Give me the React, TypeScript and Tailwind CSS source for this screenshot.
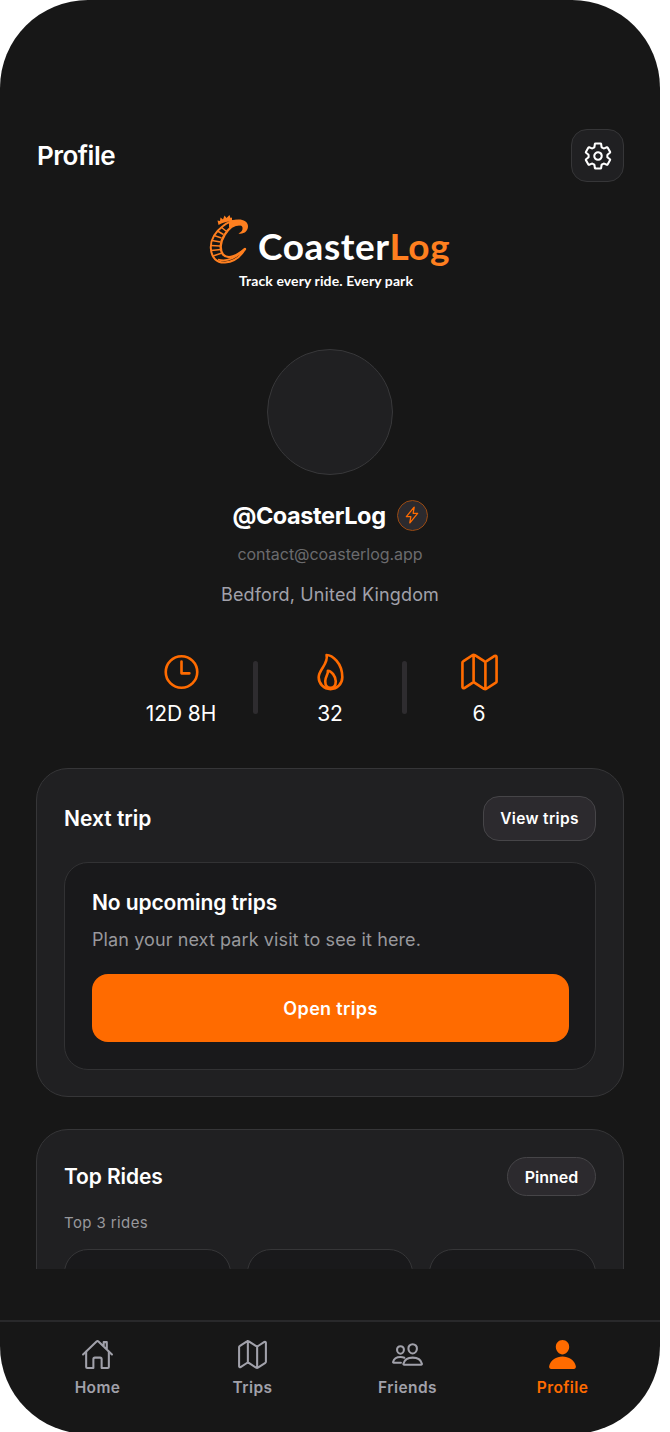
import React from "react";
import {
  IoFlameOutline,
  IoFlashOutline,
  IoHomeOutline,
  IoMapOutline,
  IoPeopleOutline,
  IoPerson,
  IoSettingsOutline,
  IoTimeOutline,
} from "react-icons/io5";
import type { IconType } from "react-icons";

interface IStatProps {
  icon: IconType;
  value: string;
}

const Stat: React.FC<IStatProps> = ({ icon: Icon, value }) => (
  <div className="flex w-36 flex-col items-center">
    <Icon className="size-[43px] text-[#ff6b00]" />
    <span className="mt-2 text-[21px] leading-[26px] tracking-[-0.1px]">{value}</span>
  </div>
);

const Divider = () => <div className="mt-[10px] h-[53px] w-[5px] rounded-full bg-[#2e2c2f]" />;

interface ITabProps {
  icon: IconType;
  label: string;
  active?: boolean;
}

const Tab: React.FC<ITabProps> = ({ icon: Icon, label, active }) => (
  <div
    className={`flex flex-1 flex-col items-center ${
      active ? "text-[#ff6b00]" : "text-[#a1a1aa]"
    }`}
  >
    <Icon className="size-[33px]" />
    <span className="mt-[7px] text-[15.5px] font-semibold leading-5 tracking-[0.4px]">
      {label}
    </span>
  </div>
);

const LogoMark = () => (
  <svg viewBox="0 0 40 52" className="h-[52px] w-10 shrink-0" fill="none" stroke="#ff7f1f">
    {/* rails */}
    <path
      d="M30 8C25 7 19 9 14 13C6 19 1.500 27 1.800 35C2.200 45 8 50 16 49.500C25 49 32 43 36 36"
      strokeWidth="2"
      strokeLinecap="round"
    />
    <path
      d="M31 11C25 11 19 16 15.500 22C11 29 10.500 37 14 41.500C19 47 28 43 36 36"
      strokeWidth="2.400"
      strokeLinecap="round"
    />
    {/* hook */}
    <path
      d="M20 9C29 4.500 38.500 6.500 39 13C39.200 18 35 21.500 29.500 20.500C32.500 19 34 17 33.500 14.500C33 11.500 27 11.500 20 15Z"
      fill="#ff7f1f"
      stroke="none"
    />
    {/* sleepers */}
    <path
      d="M12 14l5 4M8.500 18l6 3.500M5 22.500l7.500 2.500M3 27.500l8.500 1.500M2 32.500l9 .5M2 37.500l10-1M4 43l9-3"
      strokeWidth="1.500"
    />
    <path d="M9 46.500C17 49 26 45 33 38.500" strokeWidth="1.800" />
    {/* train */}
    <path
      d="M9.500 12L8.500 7.500l2.500 .5 .5-3.500 2.500 2 1.500-4 2 2.500L20.500 2l1 3 1.500-.5v4C18 8 14 9.500 9.500 12Z"
      fill="#ff7f1f"
      stroke="none"
    />
  </svg>
);

const App: React.FC = () => {
  return (
    <div className="h-[1432px] w-[670px] overflow-hidden bg-white font-['Inter',sans-serif] text-white">
      <div className="flex h-[1434px] w-[660px] flex-col overflow-hidden rounded-[88px] bg-[#171717]">
        <div className="h-[1269px] shrink-0 overflow-hidden px-9 pt-[129px]">
          {/* header */}
          <div className="flex h-[53px] items-center justify-between">
            <h1 className="-mt-px ml-px text-[26px] font-semibold tracking-[-0.5px]">Profile</h1>
            <button className="flex size-[53px] items-center justify-center rounded-2xl border border-[#363638] bg-[#202022]">
              <IoSettingsOutline className="size-[30px] [&_path]:[stroke-width:35]" />
            </button>
          </div>

          {/* logo */}
          <div className="mt-[31px] flex h-[78px] flex-col items-center">
            <div className="flex h-[52px] w-[242px]">
              <LogoMark />
              <span className="ml-[9px] mt-[10px] whitespace-nowrap font-['Lato',sans-serif] text-[37px] font-bold leading-[46px] tracking-[0.6px]">
                Coaster<span className="text-[#ff7f1f]">Log</span>
              </span>
            </div>
            <span className="mr-2 mt-[6px] font-['Lato',sans-serif] text-[14px] font-bold leading-5 tracking-[0.1px]">
              Track every ride. Every park
            </span>
          </div>

          {/* user */}
          <div className="mt-[58px] flex flex-col items-center">
            <div className="size-[126px] rounded-full border border-[#38383a] bg-[#202022]" />
            <div className="mt-6 flex h-8 items-center gap-[11px]">
              <h2 className="mt-px text-[23.5px] font-bold tracking-[-0.4px]">@CoasterLog</h2>
              <div className="flex size-[31px] items-center justify-center rounded-full border border-[#9a4a12] bg-[#2c2a2e]">
                <IoFlashOutline className="size-[18px] text-[#ff6b00] [&_path]:[stroke-width:36]" />
              </div>
            </div>
            <p className="mt-[11px] text-[16px] leading-6 tracking-[-0.03px] text-[#6b6b6e]">
              contact@coasterlog.app
            </p>
            <p className="mt-[17px] text-[18px] leading-6 tracking-[0.15px] text-[#a1a1aa]">
              Bedford, United Kingdom
            </p>
          </div>

          {/* stats */}
          <div className="mt-11 flex h-[76px] justify-center">
            <Stat icon={IoTimeOutline} value="12D 8H" />
            <Divider />
            <Stat icon={IoFlameOutline} value="32" />
            <Divider />
            <Stat icon={IoMapOutline} value="6" />
          </div>

          {/* next trip */}
          <section className="mt-[41px] h-[329px] rounded-[32px] border border-[#363638] bg-[#202022] px-[27px] pt-[27px]">
            <div className="flex h-[45px] items-center justify-between">
              <h3 className="text-[21px] font-semibold">Next trip</h3>
              <button className="h-[45px] w-[113px] rounded-2xl border border-[#464548] bg-[#2c2a2e] text-[15.5px] font-semibold tracking-[0.35px]">
                View trips
              </button>
            </div>
            <div className="mt-[21px] h-[208px] rounded-3xl border border-[#323234] bg-[#19191b] pl-[27px] pr-[26px] pt-[26px]">
              <h4 className="text-[21px] font-semibold leading-7 tracking-[-0.1px]">
                No upcoming trips
              </h4>
              <p className="mt-[9px] text-[18px] leading-7 tracking-[0.1px] text-[#98989c]">
                Plan your next park visit to see it here.
              </p>
              <button className="mt-5 h-[68px] w-full rounded-2xl bg-[#ff6b00] text-[18px] font-semibold tracking-[0.35px]">
                Open trips
              </button>
            </div>
          </section>

          {/* top rides */}
          <section className="mt-8 h-[329px] rounded-[32px] border border-[#363638] bg-[#202022] px-[27px] pt-[27px]">
            <div className="flex h-[39px] items-center justify-between">
              <h3 className="text-[21px] font-semibold tracking-[-0.1px]">Top Rides</h3>
              <span className="flex h-[39px] w-[89px] items-center justify-center rounded-full border border-[#464548] bg-[#2c2a2e] text-[16px] font-semibold">
                Pinned
              </span>
            </div>
            <p className="mt-[17px] text-[15px] leading-5 tracking-[0.4px] text-[#98989c]">
              Top 3 rides
            </p>
            <div className="mt-4 grid grid-cols-3 gap-4">
              <div className="h-40 rounded-3xl border border-[#363638] bg-[#19191b]" />
              <div className="h-40 rounded-3xl border border-[#363638] bg-[#19191b]" />
              <div className="h-40 rounded-3xl border border-[#363638] bg-[#19191b]" />
            </div>
          </section>
        </div>

        {/* tab bar */}
        <nav className="mt-[51px] flex h-[114px] border-t-2 border-[#29292b] px-5 pt-4">
          <Tab icon={IoHomeOutline} label="Home" />
          <Tab icon={IoMapOutline} label="Trips" />
          <Tab icon={IoPeopleOutline} label="Friends" />
          <Tab icon={IoPerson} label="Profile" active />
        </nav>
      </div>
    </div>
  );
};

export default App;
